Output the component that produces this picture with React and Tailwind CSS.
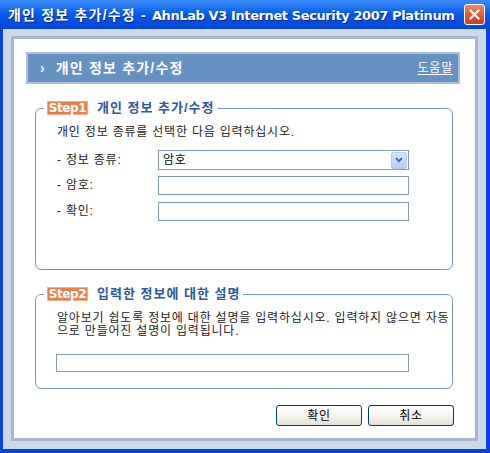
import React from 'react';

const KR = "font-['Liberation_Sans','Noto_Sans_CJK_KR',sans-serif]";

function CloseButton() {
  return (
    <div className="ml-auto mr-[5px] shrink-0 w-[21px] h-[21px] rounded-[3px] border border-white bg-gradient-to-b from-[#e98a6c] via-[#e05a3a] to-[#c8421f] flex items-center justify-center">
      <svg width="11" height="11" viewBox="0 0 11 11">
        <path d="M1.5 1.5 L9.5 9.5 M9.5 1.5 L1.5 9.5" stroke="white" strokeWidth="2.2" strokeLinecap="square" />
      </svg>
    </div>
  );
}

function StepBox({ step, title, className, children }) {
  return (
    <fieldset className={`ml-[21px] w-[418px] border border-[#7498c6] rounded-[6px] ${className}`}>
      <legend className="ml-[8px] px-[3px] flex items-center">
        <span className="h-[14px] w-[41px] flex items-center justify-center bg-[#e8804e] border border-[#f3ab88] text-white text-[12px] font-bold leading-none font-['DejaVu_Sans',sans-serif] tracking-[-0.4px]">
          {step}
        </span>
        <span className={`ml-[9px] text-[13px] font-bold leading-[14px] tracking-[1px] text-[#2a589c] ${KR}`}>{title}</span>
      </legend>
      {children}
    </fieldset>
  );
}

function Field({ label, className = '', children }) {
  return (
    <div className={`flex items-center ${className}`}>
      <span className="w-[101px] text-[12px] leading-[15px] tracking-[0.8px] text-[#222]">{label}</span>
      {children}
    </div>
  );
}

function XpButton({ children }) {
  return (
    <button className="w-[86px] h-[21px] rounded-[3px] border border-[#003c74] bg-gradient-to-b from-white via-[#f5f4ee] to-[#e3e1d6] text-[12px] leading-none tracking-[0.8px] text-black">
      {children}
    </button>
  );
}

export default function App() {
  return (
    <div className={`w-[490px] h-[453px] flex flex-col bg-[#0745d8] ${KR}`}>
      {/* title bar */}
      <div className="h-[29px] flex items-center pl-[8px] bg-gradient-to-b from-[#3a8cf7] via-[#0658ea] to-[#0445d6]">
        <span className="shrink-0 text-white font-bold leading-none [text-shadow:1px_1px_#0b2a8c] whitespace-nowrap">
          <span className="text-[14px] tracking-[1.2px]">개인 정보 추가/수정 - </span>
          <span className="text-[13px] font-['DejaVu_Sans',sans-serif] tracking-[-0.4px]">AhnLab V3 Internet Security 2007 Platinum</span>
        </span>
        <CloseButton />
      </div>

      {/* frame */}
      <div className="flex-1 ml-[3px] mr-[4px] mb-[4px] bg-[#cdd9ea] pl-[8px] pr-[8px] pt-[7px] pb-[8px] flex">
        <div className="flex-1 border-[3px] border-[#a7b6cf] bg-white flex flex-col">
          {/* header */}
          <div className="mt-[13px] ml-[12px] w-[434px] h-[32px] border-2 border-[#abc0dd] bg-[#6691c3] flex items-center pl-[12px] pr-[5px]">
            <span className="text-[#e8eef8] text-[14px] font-bold leading-none">›</span>
            <span className="ml-[11px] text-white text-[14px] font-bold leading-none tracking-[1.2px]">개인 정보 추가/수정</span>
            <span className="ml-auto text-white text-[12px] leading-none tracking-[0.8px] underline underline-offset-2">도움말</span>
          </div>

          {/* step 1 */}
          <StepBox step="Step1" title="개인 정보 추가/수정" className="mt-[17px] h-[169px]">
            <div className="pl-[21px]">
              <p className="mt-[10px] text-[12px] leading-[15px] tracking-[0.8px] text-[#222]">개인 정보 종류를 선택한 다음 입력하십시오.</p>
              <Field label="- 정보 종류:" className="mt-[10px]">
                <div className="w-[251px] h-[20px] border border-[#7f9db9] flex items-center pl-[4px] pr-[1px]">
                  <span className="text-[12px] leading-none tracking-[0.8px] text-black">암호</span>
                  <div className="ml-auto w-[16px] h-[17px] rounded-[2px] border border-[#b7cbf8] bg-gradient-to-b from-[#d6e2fd] to-[#b6cbfb] flex items-center justify-center">
                    <svg width="8" height="6" viewBox="0 0 8 6">
                      <path d="M1 1.2 L4 4.2 L7 1.2" fill="none" stroke="#4d6185" strokeWidth="1.8" />
                    </svg>
                  </div>
                </div>
              </Field>
              <Field label="- 암호:" className="mt-[6px]">
                <div className="w-[251px] h-[19px] border border-[#7f9db9]" />
              </Field>
              <Field label="- 확인:" className="mt-[7px]">
                <div className="w-[251px] h-[19px] border border-[#7f9db9]" />
              </Field>
            </div>
          </StepBox>

          {/* step 2 */}
          <StepBox step="Step2" title="입력한 정보에 대한 설명" className="mt-[17px] h-[102px]">
            <div className="pl-[20px]">
              <p className="mt-[11px] ml-[1px] text-[12px] leading-[13px] text-[#222] whitespace-nowrap tracking-[0.8px]">
                알아보기 쉽도록 정보에 대한 설명을 입력하십시오. 입력하지 않으면 자동
                <br />
                으로 만들어진 설명이 입력됩니다.
              </p>
              <div className="mt-[16px] w-[353px] h-[18px] border border-[#7f9db9]" />
            </div>
          </StepBox>

          {/* buttons */}
          <div className="mt-[16px] mr-[21px] flex justify-end gap-[6px]">
            <XpButton>확인</XpButton>
            <XpButton>취소</XpButton>
          </div>
        </div>
      </div>
    </div>
  );
}
